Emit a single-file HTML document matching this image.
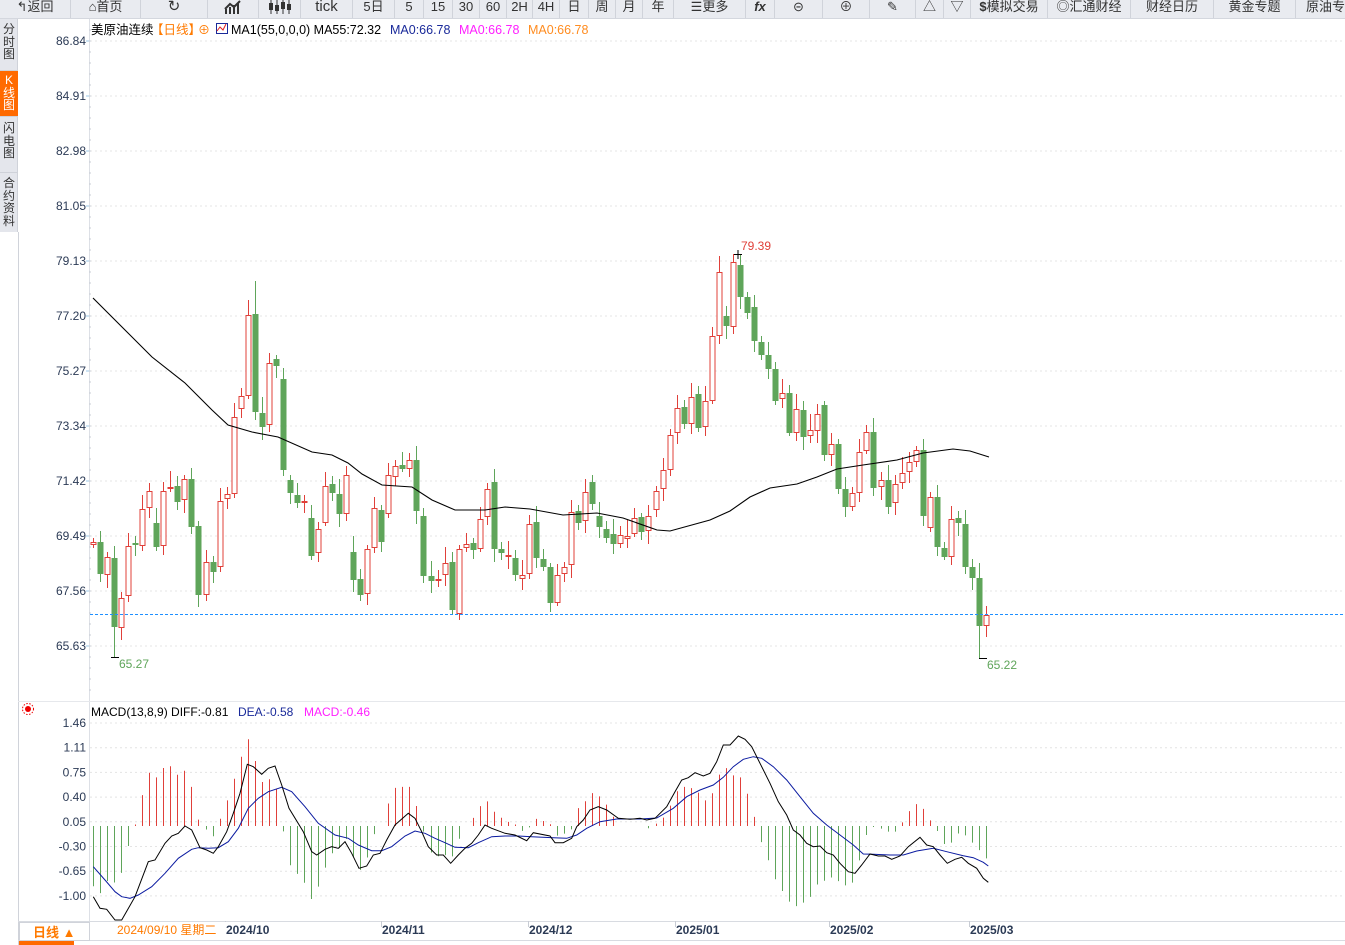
<!DOCTYPE html>
<html><head><meta charset="utf-8">
<style>
*{margin:0;padding:0;box-sizing:border-box}
body{width:1345px;height:945px;overflow:hidden;background:#fff;font-family:"Liberation Sans","Noto Sans CJK SC",sans-serif;position:relative}
#tb{position:absolute;left:0;top:0;width:1345px;height:19px;background:#e9ebf0;border-bottom:1px solid #d4d7de}
#tb div{position:absolute;top:0;height:18px;border-right:1px solid #d0d3da;font-size:13px;color:#333;text-align:center;line-height:13px;white-space:nowrap;overflow:hidden}
#side{position:absolute;left:0;top:19px;width:18px;height:213px;background:#e4e6ec;border-right:1px solid #cfd2d9}
.tab{position:absolute;left:0;width:18px;font-size:12px;color:#333;text-align:center;line-height:12.5px;border-bottom:1px solid #cfd2d9}
svg{position:absolute;left:0;top:0}
</style></head><body>
<div id="tb">
<div style="left:0;width:71px">↰返回</div>
<div style="left:71px;width:70px">⌂首页</div>
<div style="left:141px;width:67px;font-size:15px">↻</div>
<div style="left:208px;width:51px"><svg style="position:static" width="20" height="14"><path d="M3 14V9M7 14V7M11 14V5M15 14V3M2 9L7 4L11 7L17 1" stroke="#333" stroke-width="2" fill="none"/></svg></div>
<div style="left:259px;width:42px"><svg style="position:static" width="26" height="14"><path d="M4 0V14M10 0V14M16 0V14M22 0V14" stroke="#333"/><rect x="2" y="3" width="4" height="7" fill="#333"/><rect x="8" y="5" width="4" height="6" fill="#333"/><rect x="14" y="2" width="4" height="7" fill="#333"/><rect x="20" y="4" width="4" height="6" fill="#333"/></svg></div>
<div style="left:301px;width:52px;font-size:15px">tick</div>
<div style="left:353px;width:42px">5日</div>
<div style="left:395px;width:29px">5</div>
<div style="left:424px;width:29px">15</div>
<div style="left:453px;width:27px">30</div>
<div style="left:480px;width:27px">60</div>
<div style="left:507px;width:26px">2H</div>
<div style="left:533px;width:27px">4H</div>
<div style="left:560px;width:29px">日</div>
<div style="left:589px;width:27px">周</div>
<div style="left:616px;width:27px">月</div>
<div style="left:643px;width:31px">年</div>
<div style="left:674px;width:72px">☰更多</div>
<div style="left:746px;width:29px;font-style:italic;font-weight:bold">fx</div>
<div style="left:775px;width:48px">⊝</div>
<div style="left:823px;width:47px">⊕</div>
<div style="left:870px;width:46px">✎</div>
<div style="left:916px;width:28px">△</div>
<div style="left:944px;width:27px">▽</div>
<div style="left:971px;width:77px"><b>$</b>模拟交易</div>
<div style="left:1048px;width:83px">◎汇通财经</div>
<div style="left:1131px;width:83px">财经日历</div>
<div style="left:1214px;width:82px">黄金专题</div>
<div style="left:1296px;width:60px">原油专</div>
</div>
<div id="side">
<div class="tab" style="top:4px;height:48px">分<br>时<br>图</div>
<div class="tab" style="top:52px;height:46px;background:#ff6a00;color:#fff;padding-top:3px">K<br>线<br>图</div>
<div class="tab" style="top:98px;height:56px;padding-top:5px">闪<br>电<br>图</div>
<div class="tab" style="top:154px;height:59px;padding-top:4px;border:none">合<br>约<br>资<br>料</div>
</div>
<svg id="c" width="1345" height="945" xmlns="http://www.w3.org/2000/svg"></svg>
<script>
(function(){
var s='';
function T(x,y,t,c,a,sz,w){s+='<text x="'+x+'" y="'+y+'" fill="'+c+'" font-size="'+(sz||12)+'" text-anchor="'+(a||'start')+'"'+(w?' font-weight="bold"':'')+' font-family="Liberation Sans,Noto Sans CJK SC,sans-serif">'+t+'</text>';}
s+='<line x1="18.5" y1="232" x2="18.5" y2="945" stroke="#d0d3da"/>';
s+='<line x1="89.5" y1="19" x2="89.5" y2="921" stroke="#dde0e6"/>';
s+='<line x1="18" y1="701.5" x2="1345" y2="701.5" stroke="#e6e8ec"/>';
s+='<line x1="18" y1="921.5" x2="1345" y2="921.5" stroke="#d8dbe1"/>';
s+='<line x1="18" y1="940.5" x2="1345" y2="940.5" stroke="#d8dbe1"/>';
var pl=['86.84','84.91','82.98','81.05','79.13','77.20','75.27','73.34','71.42','69.49','67.56','65.63'];
for(var i=0;i<12;i++){var y=41+i*55;s+='<line x1="90" y1="'+y+'" x2="1345" y2="'+y+'" stroke="#e4e4e4" stroke-dasharray="2,3"/>';
s+='<line x1="86" y1="'+y+'" x2="90" y2="'+y+'" stroke="#9cc8e8"/>';T(86,y+4,pl[i],'#2b3a55','end');}
for(var y=30;y<700;y+=11)s+='<line x1="89" y1="'+y+'" x2="91" y2="'+y+'" stroke="#c8ccd4"/>';
var ml=['1.46','1.11','0.75','0.40','0.05','-0.30','-0.65','-1.00'];
for(var i=0;i<8;i++){var y=723+i*24.7;s+='<line x1="90" y1="'+y+'" x2="1345" y2="'+y+'" stroke="#e4e4e4" stroke-dasharray="2,3"/>';T(86,y+4,ml[i],'#2b3a55','end');}
T(91,34,'美原油连续','#000','start',12.5);T(151,34,'【日线】','#ff7a00','start',12.5);T(198,34,'⊕','#ff7a00');
s+='<rect x="216.5" y="23.5" width="11" height="10" fill="#fff" stroke="#1a2a9a"/><path d="M217 31 L220 27 L223 30 L226 24" stroke="#e02020" fill="none"/>';
T(231,34,'MA1(55,0,0,0) MA55:72.32','#000','start',12.5);T(390,34,'MA0:66.78','#1a2a9a','start',12.5);T(459,34,'MA0:66.78','#ff20ff','start',12.5);T(528,34,'MA0:66.78','#ff8c20','start',12.5);
var A=[[93,542,545,1],[100,542,574,0],[107,557,575,1],[114,558,627,0],[121,598,628,1],[128,546,596,1],[135,543,545,0],[142,509,546,1],[149,491,508,1],[156,523,547,0],[163,491,546,1],[170,487,489,1],[177,486,502,0],[184,479,500,1],[191,479,527,0],[198,526,595,0],[205,562,595,1],[212,562,572,0],[219,501,567,1],[226,494,499,1],[233,417,494,1],[240,396,409,1],[247,315,396,1],[254,314,412,0],[261,413,427,0],[268,363,425,1],[275,359,366,0],[282,379,470,0],[289,480,493,0],[296,495,503,0],[303,501,503,1],[310,518,556,0],[317,529,553,1],[324,486,523,1],[331,484,493,0],[338,494,514,0],[345,475,514,1],[352,552,580,0],[359,579,595,0],[366,549,594,1],[373,508,548,1],[380,510,542,0],[387,475,514,1],[394,466,477,1],[401,465,469,0],[408,460,469,1],[415,460,511,0],[422,516,576,0],[429,576,581,0],[436,579,581,1],[443,563,575,1],[450,562,610,0],[457,549,614,1],[464,544,548,1],[471,543,550,0],[478,519,549,1],[485,489,517,1],[492,482,549,0],[499,549,553,0],[506,555,557,1],[513,558,575,0],[520,575,579,1],[527,524,574,1],
[534,522,558,0],[541,559,567,0],[548,567,603,0],[555,575,603,1],[562,567,574,1],[569,512,565,1],[576,511,523,0],[583,492,521,1],[590,482,504,0],[597,516,527,0],[604,529,538,0],[611,534,544,0],[618,535,544,1],[625,536,539,1],[632,518,534,1],[639,517,532,0],[646,516,531,1],[653,491,510,1],[660,470,489,1],[667,435,470,1],[674,408,433,1],[681,407,424,0],[688,397,424,1],[695,394,428,0],[702,401,427,1],[709,336,401,1],[716,272,336,1],[723,316,326,0],[730,262,327,1],[737,265,297,0],[744,297,313,0],[751,307,341,0],[758,342,355,0],[765,355,369,0],[772,369,401,0],[779,393,399,1],[786,393,433,0],[793,409,433,1],[800,410,437,0],[807,430,436,1],[814,414,431,1],[821,405,455,0],[828,444,455,1],[835,444,489,0],[842,489,507,0],[849,493,507,1],[856,452,493,1],[863,432,451,1],[870,432,488,0],[877,480,487,1],[884,480,507,0],[891,484,503,1],[898,473,483,1],[905,462,472,1],[912,450,462,1],[919,450,516,0],[926,497,528,1],[933,497,547,0],[940,548,557,0],[947,519,557,1],[954,518,523,0],[961,524,567,0],[968,567,578,0],[975,578,626,0],[982,615,626,1]];
var sc=(986-93)/(A.length-1);
for(var i=0;i<A.length;i++){var d=A[i],x=Math.round(93+i*sc)+0.5,bt=d[1],bb=d[2];
var ht=bt-(4+(i*7)%13),lw=bb+(3+(i*5)%11);
if(i==23)ht=281; if(i==91)ht=254; if(i==92)ht=255; if(i==3)lw=657; if(i==A.length-2)lw=658; if(i==52)lw=620;
var col=d[3]?'#e0403a':'#5fa55a';
s+='<line x1="'+x+'" y1="'+ht+'" x2="'+x+'" y2="'+lw+'" stroke="'+col+'"/>';
if(d[3])s+='<rect x="'+(x-2.5)+'" y="'+(bt+.5)+'" width="5" height="'+Math.max(bb-bt-1,1)+'" fill="#fff" stroke="'+col+'"/>';
else s+='<rect x="'+(x-3)+'" y="'+bt+'" width="6" height="'+Math.max(bb-bt,2)+'" fill="'+col+'"/>';}
s+='<polyline fill="none" stroke="#000" stroke-width="1.1" points="93,298 125,330 152,357 185,383 212,410 228,425 252,432 278,437 312,452 332,455 348,463 362,474 382,485 412,487 432,500 455,510 485,510 505,507 530,509 563,515 597,513 623,518 657,530 670,531 710,520 730,511 750,497 770,488 797,484 817,477 837,469 863,465 897,460 923,453 953,449 970,451 989,457"/>';
s+='<line x1="90" y1="614.5" x2="1345" y2="614.5" stroke="#1e8fff" stroke-dasharray="3,2"/>';
s+='<path d="M734 254.5h8M738 250v9M111 657.5h8M979 658.5h8" stroke="#000"/>';
T(741,250,'79.39','#e0403a');T(119,668,'65.27','#5fa55a');T(987,669,'65.22','#5fa55a');
s+='<circle cx="28" cy="709" r="3" fill="#e00" /><circle cx="28" cy="709" r="5.5" fill="none" stroke="#e00" stroke-dasharray="1.5,1.5"/>';
T(91,716,'MACD(13,8,9) DIFF:-0.81','#000');T(238,716,'DEA:-0.58','#1a2a9a');T(304,716,'MACD:-0.46','#ff20ff');
function cv(o,arr){var r=[];for(var i=0;i<arr.length;i+=2)r.push([o[0]+arr[i]/3,o[1]+arr[i+1]/3]);return r;}
var dif=cv([85,700],[25,590,45,625,65,628,90,660,110,660,150,590,190,485,210,480,240,430,260,408,280,400,300,378,320,390,345,443,365,450,385,460,400,440,425,395,445,340,465,280,487,193,505,200,530,223,550,205,570,198,590,255,612,325,655,395,680,455,695,465,720,448,740,440,760,445,780,425,800,460,822,505,845,498,865,465,885,460,905,420,930,375,970,340,990,355,1010,395,1030,440,1055,465,1075,465,1097,490,1120,465,1140,445,1160,430,1180,405,1200,375,1220,385,1260,400,1290,405,1325,422,1345,398]).concat(cv([540,700],[30,408,45,428,70,428,95,415,110,380,130,360,150,330,175,320,200,330,235,355,270,358,300,355,320,360,345,355,380,320,405,275,425,240,445,233,465,218,490,228,510,220,530,185,550,135,570,135,595,108,615,118,635,140,660,190,690,250,715,305,740,345,760,390,780,405,800,430,820,440,840,438,860,458,880,465,900,490,925,515,945,520,965,495,990,462,1015,468,1035,468,1055,478,1080,468,1105,440,1140,412,1160,435,1180,440,1200,465,1222,490,1245,478,1265,472,1285,490,1310,505,1330,535,1345,547]));
var dea=cv([85,700],[25,500,60,540,90,575,110,590,135,595,160,585,200,560,240,520,280,475,320,448,340,443,370,445,400,443,430,425,460,385,490,325,520,295,550,275,590,262,620,275,660,320,700,370,750,405,790,415,820,435,860,452,890,452,920,440,960,408,990,393,1020,400,1050,415,1080,428,1110,442,1150,443,1180,428,1220,410,1260,408,1300,408,1340,410]).concat(cv([540,700],[40,413,80,415,110,405,140,385,180,365,230,357,300,357,350,354,400,325,440,290,480,270,520,255,550,232,580,200,610,178,640,170,665,175,700,200,740,240,780,290,820,340,860,375,900,405,940,435,970,462,1000,463,1050,465,1090,465,1130,453,1180,445,1220,455,1270,467,1300,473,1330,487,1345,498]));
function at(p,x){for(var i=1;i<p.length;i++)if(p[i][0]>=x){var a=p[i-1],b=p[i];return a[1]+(b[1]-a[1])*(x-a[0])/Math.max(b[0]-a[0],.01);}return p[p.length-1][1];}
for(var i=0;i<A.length;i++){var x=Math.round(93+i*sc)+0.5;var h=2*(at(dea,x)-at(dif,x));if(Math.abs(h)<1)continue;
s+='<line x1="'+x+'" y1="826" x2="'+x+'" y2="'+(826-h)+'" stroke="'+(h>0?'#e0403a':'#5fa55a')+'"/>';}
function pl2(p,c){s+='<polyline fill="none" stroke="'+c+'" points="'+p.map(function(q){return q[0].toFixed(1)+','+q[1].toFixed(1)}).join(' ')+'"/>';}
pl2(dea,'#0a1aa0');pl2(dif,'#000');
var dx=[[226,'2024/10'],[382,'2024/11'],[529,'2024/12'],[676,'2025/01'],[830,'2025/02'],[970,'2025/03']];
dx.forEach(function(d){s+='<line x1="'+(d[0]-0.5)+'" y1="921" x2="'+(d[0]-0.5)+'" y2="927" stroke="#c8ccd4"/>';T(d[0],934,d[1],'#2b3a55','start',12,1);});
s+='<rect x="114" y="922" width="112" height="17" fill="#fff"/>';T(117,934,'2024/09/10 星期二','#ff7a00');
s+='<rect x="19.5" y="922.5" width="70" height="18" fill="#fff" stroke="#d0d3da"/>';T(33,937,'日线 ▲','#ff7a00','start',13,1);
s+='<rect x="19" y="941" width="55" height="4" fill="#ff6a00"/>';
document.getElementById('c').innerHTML=s;
})();
</script>
</body></html>
